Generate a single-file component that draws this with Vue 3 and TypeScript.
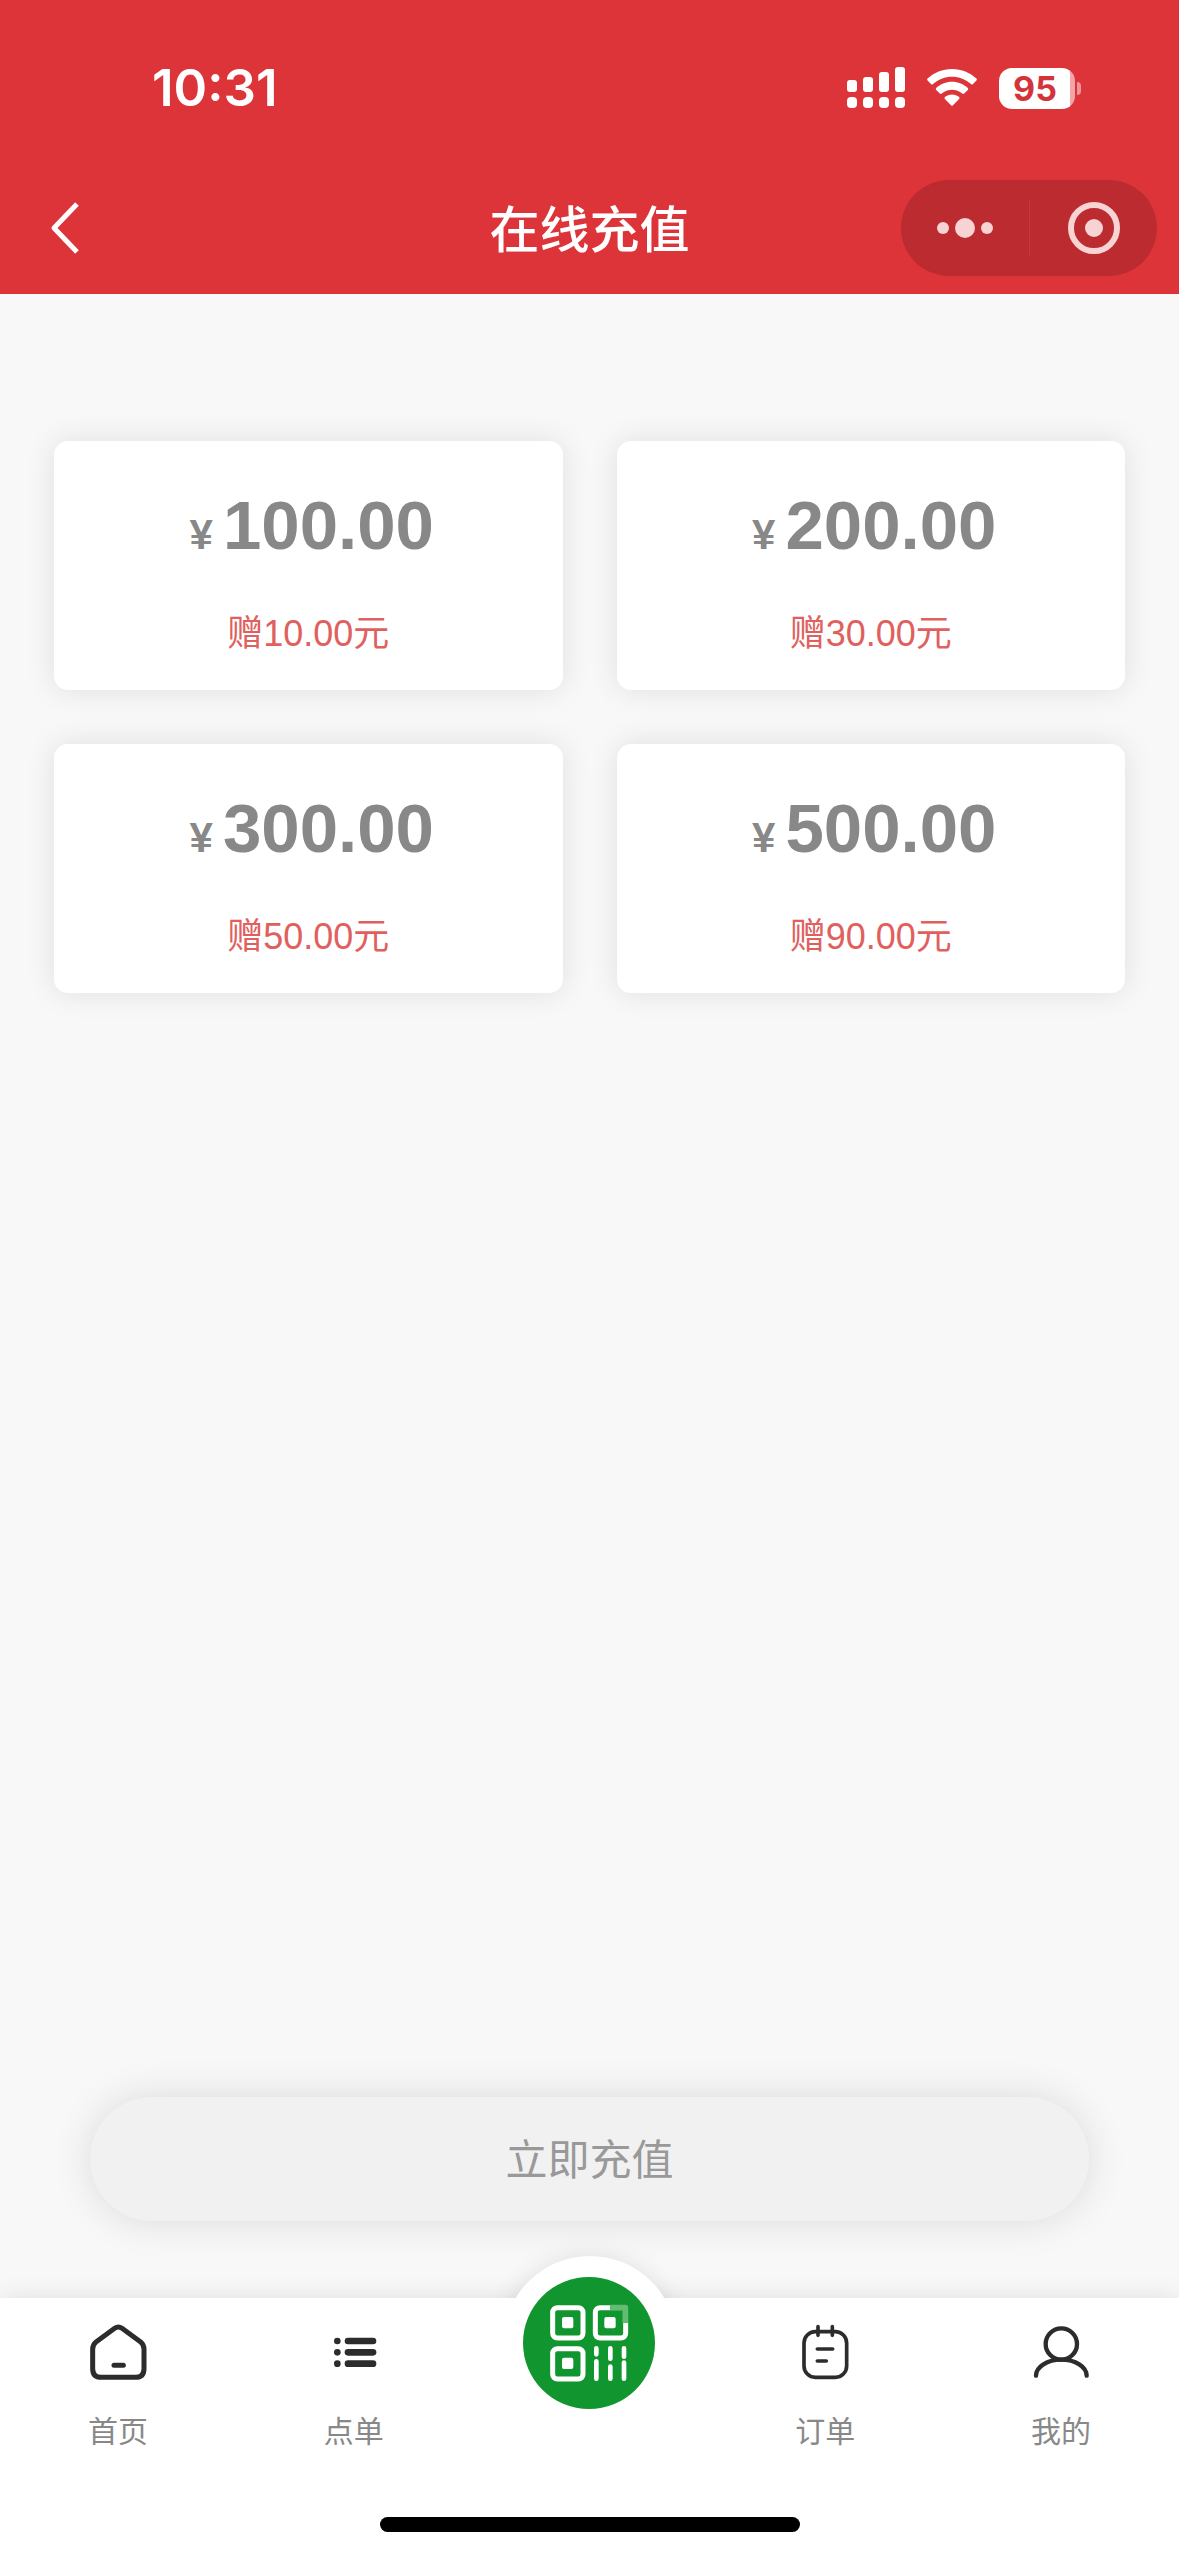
<script setup lang="ts">
import { ref } from 'vue'

interface Plan {
  amount: string
  bonus: string
}

const plans: Plan[] = [
  { amount: '100.00', bonus: '10.00' },
  { amount: '200.00', bonus: '30.00' },
  { amount: '300.00', bonus: '50.00' },
  { amount: '500.00', bonus: '90.00' },
]

const selected = ref<number | null>(null)
</script>

<template>
  <div class="page">
    <header class="header">
      <div class="status">
        <span class="time">10:31</span>
        <div class="indicators">
          <svg width="58" height="42" viewBox="0 0 58 42" fill="#fff" aria-hidden="true">
            <rect x="0" y="13" width="10" height="12" rx="3" />
            <rect x="16" y="10" width="10" height="15" rx="3" />
            <rect x="32" y="5" width="10" height="20" rx="3" />
            <rect x="48" y="0" width="10" height="25" rx="3" />
            <rect x="0" y="30" width="10" height="11" rx="4" />
            <rect x="16" y="30" width="10" height="11" rx="4" />
            <rect x="32" y="30" width="10" height="11" rx="4" />
            <rect x="48" y="30" width="10" height="11" rx="4" />
          </svg>
          <svg width="50" height="42" viewBox="0 0 50 42" fill="#fff" aria-hidden="true">
            <path d="M25 2C34.600 2 43 5.600 49.400 11.600Q50.400 12.600 49.400 13.600L46 17Q45 18 44 17C38.800 12.400 32.200 9.700 25 9.700S11.200 12.400 6 17Q5 18 4 17L.6 13.600Q-.4 12.600.6 11.600C7 5.600 15.400 2 25 2Z" />
            <path d="M25 14.800C31.200 14.800 36.700 17.200 40.800 21Q41.800 22 40.800 23L37.200 26.600Q36.200 27.500 35.200 26.600C32.500 24.200 28.900 22.700 25 22.700S17.500 24.200 14.800 26.600Q13.800 27.500 12.800 26.600L9.200 23Q8.200 22 9.200 21C13.300 17.200 18.800 14.800 25 14.800Z" />
            <path d="M25 27.400C27.700 27.400 30.200 28.400 32.100 30Q33.100 31 32.100 32L26 38.300Q25 39.300 24 38.300L17.900 32Q16.900 31 17.900 30C19.800 28.400 22.300 27.400 25 27.400Z" />
          </svg>
          <div class="battery"><span class="cell">95</span><span class="nub"></span></div>
        </div>
      </div>
      <div class="navbar">
        <button class="back" type="button" aria-label="返回">
          <svg width="36" height="60" viewBox="0 0 36 60" fill="none" stroke="#fff" stroke-width="5" stroke-linejoin="round" aria-hidden="true">
            <path d="M30 6L7 30L30 54" />
          </svg>
        </button>
        <h1 class="title">在线充值</h1>
        <div class="capsule">
          <button type="button" aria-label="更多">
            <svg width="60" height="60" viewBox="0 0 60 60" fill="#f8d3d4" aria-hidden="true">
              <circle cx="8" cy="30" r="6" />
              <circle cx="30" cy="30" r="10" />
              <circle cx="52" cy="30" r="6" />
            </svg>
          </button>
          <span class="divider"></span>
          <button type="button" aria-label="关闭">
            <svg width="60" height="60" viewBox="0 0 60 60" aria-hidden="true">
              <circle cx="31" cy="30" r="23" fill="none" stroke="#f8d3d4" stroke-width="6" />
              <circle cx="31" cy="30" r="9" fill="#f8d3d4" />
            </svg>
          </button>
        </div>
      </div>
    </header>

    <main class="content">
      <div class="plans">
        <button
          v-for="(plan, i) in plans"
          :key="plan.amount"
          class="plan"
          type="button"
          :aria-pressed="selected === i"
          @click="selected = i"
        >
          <span class="price"><span class="yen">¥</span>{{ plan.amount }}</span>
          <span class="bonus">赠{{ plan.bonus }}元</span>
        </button>
      </div>
      <button class="submit" type="button">立即充值</button>
    </main>

    <nav class="tabbar">
      <div class="tabs">
        <a class="tab" href="#home">
          <svg viewBox="0 0 180 180" fill="none" stroke="#2c2c2c" stroke-width="15" stroke-linejoin="round" stroke-linecap="round" aria-hidden="true">
            <path d="M80 19Q91 11 102 19L157 59Q168 68 168 82V140Q168 166 142 166H40Q14 166 14 140V82Q14 68 25 59Z" />
            <path d="M78 130H106" />
          </svg>
          <span>首页</span>
        </a>
        <a class="tab" href="#menu">
          <svg viewBox="0 0 180 180" fill="#2c2c2c" aria-hidden="true">
            <circle cx="40" cy="57" r="10" />
            <circle cx="40" cy="91" r="10" />
            <circle cx="40" cy="125" r="10" />
            <rect x="62" y="47" width="95" height="20" rx="10" />
            <rect x="62" y="81" width="95" height="20" rx="10" />
            <rect x="62" y="115" width="95" height="20" rx="10" />
          </svg>
          <span>点单</span>
        </a>
        <div class="tab">
          <button class="scan" type="button" aria-label="扫码">
            <svg viewBox="0 0 396 396" fill="none" stroke="#fff" stroke-linecap="round" aria-hidden="true">
              <g stroke-width="15">
                <rect x="89" y="92" width="91" height="91" rx="14" />
                <rect x="217" y="92" width="91" height="91" rx="14" />
                <rect x="89" y="215" width="91" height="91" rx="14" />
              </g>
              <path d="M262 91H294Q307 91 307 105V138" stroke="#11952e" stroke-width="20" stroke-linecap="butt" />
              <path d="M262 92H307V138" stroke="#62bd73" stroke-width="17" stroke-linecap="butt" stroke-linejoin="round" />
              <g fill="#fff" stroke="none">
                <rect x="117" y="120" width="34" height="34" rx="6" />
                <rect x="244" y="120" width="34" height="34" rx="6" />
                <rect x="117" y="242" width="34" height="34" rx="6" />
              </g>
              <g stroke-width="14">
                <path d="M220 214V232M220 253V305M262 214V245M262 269V305M303 214V239M303 257V305" />
              </g>
            </svg>
          </button>
        </div>
        <a class="tab" href="#orders">
          <svg viewBox="0 0 180 180" fill="none" stroke="#2c2c2c" stroke-width="11" stroke-linecap="round" aria-hidden="true">
            <rect x="27" y="29" width="128" height="137" rx="34" />
            <path d="M69 14V40M112 14V40M67 81H113M67 117H94" />
          </svg>
          <span>订单</span>
        </a>
        <a class="tab" href="#mine">
          <svg viewBox="0 0 180 180" fill="none" stroke="#2c2c2c" stroke-width="13" stroke-linecap="round" aria-hidden="true">
            <circle cx="91" cy="66" r="47" />
            <path d="M15 161C15 134 49 113 91 113S167 134 167 161" />
          </svg>
          <span>我的</span>
        </a>
      </div>
      <div class="home-indicator"></div>
    </nav>
  </div>
</template>

<style>
body {
  margin: 0;
  background: #f8f8f8;
}
</style>

<style scoped>
.page {
  display: flex;
  flex-direction: column;
  min-height: 100vh;
  background: #f8f8f8;
  font-family: 'Liberation Sans', 'Noto Sans CJK SC', sans-serif;
}

button {
  margin: 0;
  padding: 0;
  border: 0;
  background: none;
  font: inherit;
  color: inherit;
  cursor: pointer;
}

svg {
  display: block;
}

.header {
  background: #dd3439;
  color: #fff;
}

.status {
  display: flex;
  align-items: center;
  justify-content: space-between;
  height: 62px;
  padding: 57px 98px 43px 152px;
}

.time {
  font: 600 51px/62px Inter, sans-serif;
}

.indicators {
  display: flex;
  align-items: center;
  gap: 22px;
}

.battery {
  display: flex;
  align-items: center;
  gap: 2px;
}

.cell {
  box-sizing: border-box;
  width: 76px;
  height: 41px;
  padding-right: 4px;
  border-radius: 13px;
  background: linear-gradient(to right, #fff 71px, #f3a5a8 71px);
  color: #d3343a;
  font: 700 34px/41px Inter, sans-serif;
  text-align: center;
}

.nub {
  width: 4px;
  height: 13px;
  border-radius: 0 4px 4px 0;
  background: #ee9598;
}

.navbar {
  display: grid;
  grid-template-columns: 1fr auto 1fr;
  align-items: center;
  height: 132px;
  padding: 0 22px;
}

.back {
  justify-self: start;
  margin-left: 25px;
}

.title {
  margin: 0;
  padding-bottom: 4px;
  font: 500 50px/72px 'Noto Sans CJK SC', sans-serif;
}

.capsule {
  display: flex;
  align-items: center;
  justify-self: end;
  width: 256px;
  height: 96px;
  border-radius: 48px;
  background: #bb2b2f;
}

.capsule button {
  display: flex;
  flex: 1;
  justify-content: center;
}

.divider {
  width: 1px;
  height: 58px;
  background: #c23a3e;
}

.content {
  display: flex;
  flex: 1;
  flex-direction: column;
  justify-content: space-between;
  padding: 147px 54px 77px;
}

.plans {
  display: grid;
  grid-template-columns: 1fr 1fr;
  gap: 54px;
}

.plan {
  display: flex;
  flex-direction: column;
  align-items: center;
  gap: 41px;
  padding: 43px 0 31px;
  border-radius: 14px;
  background: #fff;
  box-shadow: 0 0 30px rgba(0, 0, 0, 0.1);
}

.price {
  padding-left: 7px;
  color: #888;
  font-size: 69px;
  font-weight: 700;
  line-height: 84px;
}

.yen {
  margin-right: 10px;
  font-size: 42px;
  line-height: 42px;
}

.bonus {
  color: #e0605e;
  font-size: 36px;
  line-height: 50px;
}

.submit {
  height: 124px;
  margin: 0 36px;
  padding-bottom: 6px;
  border-radius: 62px;
  background: #f1f1f1;
  box-shadow: 0 0 40px rgba(0, 0, 0, 0.12);
  color: #999;
  font-size: 42px;
}

.tabbar {
  position: relative;
  z-index: 0;
  padding: 24px 0;
  box-shadow: 0 0 24px rgba(0, 0, 0, 0.1);
}

/* White bar, layered over the lower half of the round bump. */
.tabbar::before {
  content: '';
  position: absolute;
  inset: 0;
  z-index: -1;
  background: #fff;
}

.tabbar::after {
  content: '';
  position: absolute;
  top: -42px;
  left: calc(50% - 87px);
  z-index: -2;
  width: 174px;
  height: 174px;
  border-radius: 50%;
  background: #fff;
  box-shadow: 0 0 24px rgba(0, 0, 0, 0.1);
}

.tabs {
  display: grid;
  grid-template-columns: repeat(5, 1fr);
  height: 130px;
}

.tab {
  display: flex;
  flex-direction: column;
  align-items: center;
  gap: 29px;
  color: #888;
  font-size: 30px;
  line-height: 42px;
  text-decoration: none;
}

.tab > svg {
  width: 60px;
  height: 60px;
}

.scan {
  width: 132px;
  height: 132px;
  margin-top: -45px;
  border-radius: 50%;
  background: #11952e;
}

.home-indicator {
  width: 420px;
  height: 15px;
  margin: 65px auto 0;
  border-radius: 8px;
  background: #000;
}
</style>
